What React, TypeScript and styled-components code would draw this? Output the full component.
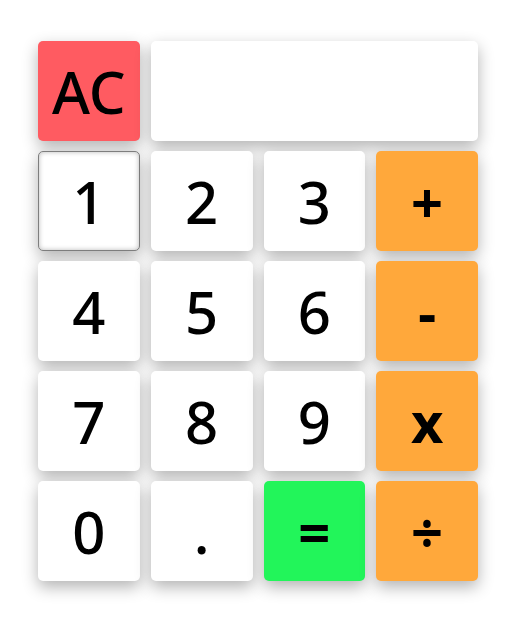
import React from 'react';
import styled, { createGlobalStyle } from 'styled-components';

const GlobalStyle = createGlobalStyle`
  body {
    margin: 0;
    background: #ffffff;
    font-family: "Trebuchet MS", "Noto Sans", sans-serif;
  }
`;

const Page = styled.div`
  min-height: 100vh;
  box-sizing: border-box;
  padding: 41px 0 0 38px;
`;

const Keypad = styled.div`
  display: grid;
  grid-template-columns: repeat(4, 101.75px);
  grid-auto-rows: 100px;
  column-gap: 11px;
  row-gap: 10px;
`;

type Tone = 'clear' | 'digit' | 'op' | 'equals';

const tones: Record<Tone, string> = {
  clear: '#ff5b61',
  digit: '#ffffff',
  op: '#ffa83b',
  equals: '#22f55a',
};

const Key = styled.button<{ $tone: Tone; $focused?: boolean }>`
  display: flex;
  align-items: center;
  justify-content: center;
  border: ${p => (p.$focused ? '1.5px solid #7e7e7e' : 'none')};
  border-radius: 5px;
  background: ${p => tones[p.$tone]};
  color: #000;
  padding: 0;
  font-family: inherit;
  font-size: ${p => (p.$tone === 'op' || p.$tone === 'equals' ? '56px' : '58px')};
  font-weight: ${p => (p.$tone === 'op' || p.$tone === 'equals' ? 700 : 500)};
  box-shadow: 0 6px 16px rgba(0, 0, 0, 0.3)
    ${p => (p.$focused ? ', inset 0 0 5px rgba(0, 0, 0, 0.28)' : '')};
  cursor: pointer;
`;

const Display = styled.div`
  grid-column: 2 / 5;
  background: #ffffff;
  border-radius: 5px;
  box-shadow: 0 6px 16px rgba(0, 0, 0, 0.3);
`;

const rows: { label: string; tone: Tone }[][] = [
  [
    { label: '1', tone: 'digit' },
    { label: '2', tone: 'digit' },
    { label: '3', tone: 'digit' },
    { label: '+', tone: 'op' },
  ],
  [
    { label: '4', tone: 'digit' },
    { label: '5', tone: 'digit' },
    { label: '6', tone: 'digit' },
    { label: '-', tone: 'op' },
  ],
  [
    { label: '7', tone: 'digit' },
    { label: '8', tone: 'digit' },
    { label: '9', tone: 'digit' },
    { label: 'x', tone: 'op' },
  ],
  [
    { label: '0', tone: 'digit' },
    { label: '.', tone: 'digit' },
    { label: '=', tone: 'equals' },
    { label: '÷', tone: 'op' },
  ],
];

export default function App() {
  return (
    <>
      <GlobalStyle />
      <Page>
        <Keypad>
          <Key $tone="clear">AC</Key>
          <Display />
          {rows.flat().map(k => (
            <Key key={k.label} $tone={k.tone} $focused={k.label === '1'}>
              {k.label}
            </Key>
          ))}
        </Keypad>
      </Page>
    </>
  );
}
